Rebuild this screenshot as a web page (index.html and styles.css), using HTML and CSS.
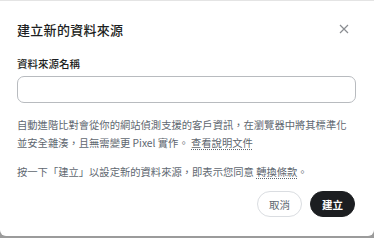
FILE: index.html
```html
<!DOCTYPE html>
<html lang="zh-Hant">
<head>
    <meta charset="UTF-8">
    <meta name="viewport" content="width=device-width, initial-scale=1.0">
    <title>建立新的資料來源</title>
    <link rel="stylesheet" href="styles.css">
</head>
<body>
    <div class="dialog">
        <div class="dialog-header">
            <h3>建立新的資料來源</h3>
            <button class="close-btn" aria-label="關閉">
                <svg width="10" height="10" viewBox="0 0 10 10">
                    <path d="M1 1 L9 9 M9 1 L1 9" stroke="#8a8d91" stroke-width="1.2" fill="none"/>
                </svg>
            </button>
        </div>
        <div class="dialog-body">
            <label class="field-label" for="source-name">資料來源名稱</label>
            <input class="text-input" id="source-name" type="text">
            <p class="note">自動進階比對會從你的網站偵測支援的客戶資訊，在瀏覽器中將其標準化並安全雜湊，且無需變更 Pixel 實作。 <a href="#" class="doc-link">查看說明文件</a></p>
            <p class="note terms">按一下「建立」以設定新的資料來源，即表示您同意 <a href="#" class="doc-link">轉換條款</a>。</p>
        </div>
        <div class="dialog-footer">
            <button class="btn btn-cancel">取消</button>
            <button class="btn btn-create">建立</button>
        </div>
    </div>
</body>
</html>
```

FILE: styles.css
```css
body {
    margin: 0;
    background: #9b9b9b;
    font-family: "Noto Sans CJK TC", "Noto Sans", sans-serif;
}

.dialog {
    width: 374px;
    height: 236px;
    background: #fff;
    border-radius: 0 0 6px 6px;
    box-sizing: border-box;
    border-top: 1px solid #e4e4e4;
    display: flex;
    flex-direction: column;
}

.dialog-header {
    display: flex;
    align-items: center;
    justify-content: space-between;
    padding: 18px 25px 0 17px;
    height: 20px;
}

h3 {
    margin: 0;
    font-size: 13px;
    letter-spacing: 0.3px;
    font-weight: 500;
    color: #1c1e21;
}

.close-btn {
    border: none;
    background: none;
    padding: 0;
    width: 10px;
    height: 10px;
    display: flex;
    cursor: pointer;
}

.dialog-body {
    padding: 18px 18px 0 17px;
}

.field-label {
    display: block;
    font-size: 10.5px;
    font-weight: 500;
    color: #1c1e21;
    line-height: 14px;
}

.text-input {
    display: block;
    box-sizing: border-box;
    width: 339px;
    height: 27px;
    margin-top: 5px;
    border: 1px solid #b8bbbf;
    border-radius: 7px;
}

.note {
    margin: 13px 0 0;
    font-size: 10.3px;
    line-height: 18px;
    color: #606770;
}

.terms {
    margin-top: 11px;
}

.doc-link {
    color: #606770;
    text-decoration: underline dotted;
    text-underline-offset: 2px;
}

.dialog-footer {
    display: flex;
    justify-content: flex-end;
    gap: 8px;
    padding: 10px 19px 0 0;
}

.btn {
    font-family: inherit;
    font-size: 10.5px;
    height: 26px;
    width: 45px;
    border-radius: 13px;
    cursor: pointer;
}

.btn-cancel {
    background: #fff;
    border: 1px solid #dadde1;
    color: #606770;
}

.btn-create {
    background: #1c1e21;
    border: 1px solid #1c1e21;
    color: #fff;
    font-weight: 700;
}
```
